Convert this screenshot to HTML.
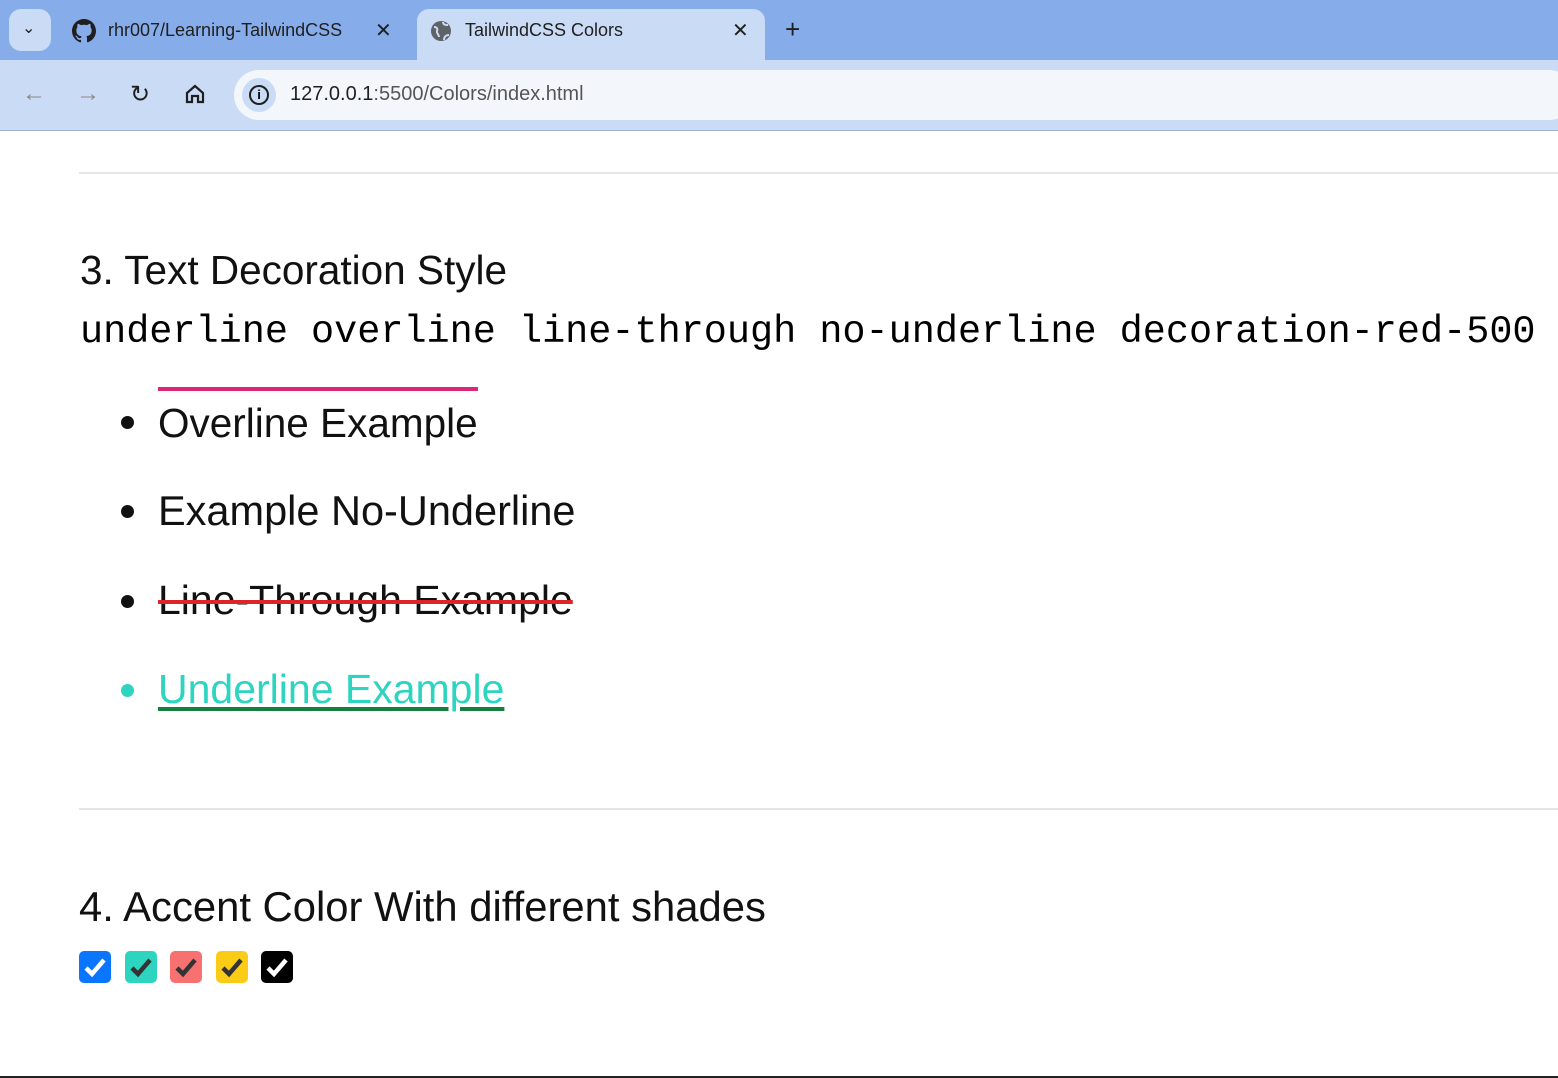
<!DOCTYPE html>
<html><head><meta charset="utf-8"><style>
body{margin:0;width:1558px;height:1078px;overflow:hidden;background:#fff;font-family:"Liberation Sans",sans-serif;position:relative}
.abs{position:absolute;white-space:nowrap}
.top{left:0;top:0;width:1558px;height:60px;background:#87acea}
.bar{left:0;top:60px;width:1558px;height:70px;background:#cadcf5;border-bottom:1px solid #9fb4d4}
.tab{left:417px;top:9px;width:348px;height:60px;background:#cadcf5;border-radius:12px 12px 0 0}
.drop{left:9px;top:9px;width:42px;height:42px;background:#cadcf5;border-radius:12px}
.url{left:234px;top:70px;width:1340px;height:50px;background:#f3f7fc;border-radius:25px}
.t{font-size:18px;color:#1f1f1f}
hr{position:absolute;left:79px;width:1479px;border:0;border-top:2px solid #e5e5e5;margin:0}
.h{font-size:41px;color:#111}
.li{font-size:41px;left:158px;color:#111}
.dot{width:13px;height:13px;border-radius:50%;background:#111;left:121px}
.cb{top:951px;width:32px;height:32px;border-radius:5px}
</style></head><body>
<div class="abs top"></div>
<div class="abs drop"></div>
<div class="abs t" style="left:22px;top:18px;font-size:16px">⌄</div>
<svg class="abs" style="left:72px;top:19px" width="24" height="24" viewBox="0 0 16 16"><path fill="#1f1f1f" d="M8 0C3.6 0 0 3.600 0 8c0 3.5 2.3 6.5 5.5 7.6.4.1.5-.2.5-.4v-1.4c-2.2.5-2.7-1-2.7-1-.4-.9-.9-1.2-.9-1.2-.7-.5.1-.5.1-.5.8.1 1.2.8 1.2.8.7 1.2 1.9.9 2.3.7.1-.5.3-.9.5-1.1-1.8-.2-3.6-.9-3.6-4 0-.9.3-1.600.8-2.1-.1-.2-.4-1 .1-2.1 0 0 .7-.2 2.2.8.6-.2 1.3-.3 2-.3s1.4.1 2 .3c1.5-1 2.2-.8 2.2-.8.4 1.1.2 1.9.1 2.1.5.6.8 1.3.8 2.1 0 3.1-1.9 3.7-3.6 3.9.3.3.5.8.5 1.5v2.2c0 .2.1.5.6.4C13.7 14.5 16 11.5 16 8c0-4.4-3.6-8-8-8z"/></svg>
<div class="abs t" style="left:108px;top:20px">rhr007/Learning-TailwindCSS</div>
<div class="abs t" style="left:375px;top:18px;font-size:20px">✕</div>
<div class="abs tab"></div>
<svg class="abs" style="left:430px;top:20px" width="22" height="22" viewBox="0 0 22 22"><circle cx="11" cy="11" r="10" fill="#5f6368"/><path d="M4 7c3 0 4 2 3 4s2 3 2 6M13 2c0 3 3 3 5 3M14 20c0-3 2-5 5-5" stroke="#cadcf5" stroke-width="2" fill="none"/></svg>
<div class="abs t" style="left:465px;top:20px">TailwindCSS Colors</div>
<div class="abs t" style="left:732px;top:18px;font-size:20px">✕</div>
<div class="abs t" style="left:785px;top:14px;font-size:26px">+</div>
<div class="abs bar"></div>
<div class="abs url"></div>
<div class="abs t" style="left:22px;top:80px;font-size:24px;color:#888">←</div>
<div class="abs t" style="left:76px;top:80px;font-size:24px;color:#888">→</div>
<div class="abs t" style="left:130px;top:80px;font-size:24px">↻</div>
<svg class="abs" style="left:184px;top:83px" width="22" height="22" viewBox="0 0 22 22"><path d="M3 10L11 3l8 7v9h-5v-6h-6v6H3z" fill="none" stroke="#1f1f1f" stroke-width="2.2"/></svg>
<div class="abs" style="left:242px;top:78px;width:34px;height:34px;border-radius:50%;background:#cadcf5"></div>
<div class="abs" style="left:249px;top:85px;width:16px;height:16px;border:2px solid #1f1f1f;border-radius:50%;font-size:13px;text-align:center;line-height:16px;font-weight:bold">i</div>
<div class="abs t" style="left:290px;top:83px;font-size:20px">127.0.0.1<span style="color:#555">:5500/Colors/index.html</span></div>

<hr style="top:172px">
<div class="abs h" style="left:80px;top:247px;font-size:40.5px">3. Text Decoration Style</div>
<div class="abs" style="left:80px;top:310px;font-family:'Liberation Mono',monospace;font-size:38.5px;color:#000">underline overline line-through no-underline decoration-red-500</div>
<div class="abs dot" style="top:416px"></div>
<div class="abs li" style="border-top:4px solid #db2777;line-height:44px;top:387px;padding-top:10px;font-size:40.5px">Overline Example</div>
<div class="abs dot" style="top:505px"></div>
<div class="abs li" style="top:487px;font-size:41.5px">Example No-Underline</div>
<div class="abs dot" style="top:595px"></div>
<div class="abs li" style="top:577px;text-decoration:line-through;text-decoration-color:#dc2626;text-decoration-thickness:4px">Line-Through Example</div>
<div class="abs dot" style="top:684px;background:#2dd4bf"></div>
<div class="abs li" style="top:666px;color:#2dd4bf;text-decoration:underline;text-decoration-color:#15803d;text-decoration-thickness:4px;text-underline-offset:4px">Underline Example</div>
<hr style="top:808px">
<div class="abs h" style="left:79px;top:883px;font-size:41.8px">4. Accent Color With different shades</div>
<svg class="abs cb" style="left:79px;background:#0a75ff" viewBox="0 0 32 32"><path d="M7 17l6 6 12-14" stroke="#fff" stroke-width="4.5" fill="none"/></svg>
<svg class="abs cb" style="left:125px;background:#2dd4bf" viewBox="0 0 32 32"><path d="M7 17l6 6 12-14" stroke="#333" stroke-width="4.5" fill="none"/></svg>
<svg class="abs cb" style="left:170px;background:#f87171" viewBox="0 0 32 32"><path d="M7 17l6 6 12-14" stroke="#333" stroke-width="4.5" fill="none"/></svg>
<svg class="abs cb" style="left:216px;background:#facc15" viewBox="0 0 32 32"><path d="M7 17l6 6 12-14" stroke="#333" stroke-width="4.5" fill="none"/></svg>
<svg class="abs cb" style="left:261px;background:#000" viewBox="0 0 32 32"><path d="M7 17l6 6 12-14" stroke="#fff" stroke-width="4.5" fill="none"/></svg>
<div class="abs" style="left:0;top:1076px;width:1558px;height:2px;background:#222"></div>
</body></html>
